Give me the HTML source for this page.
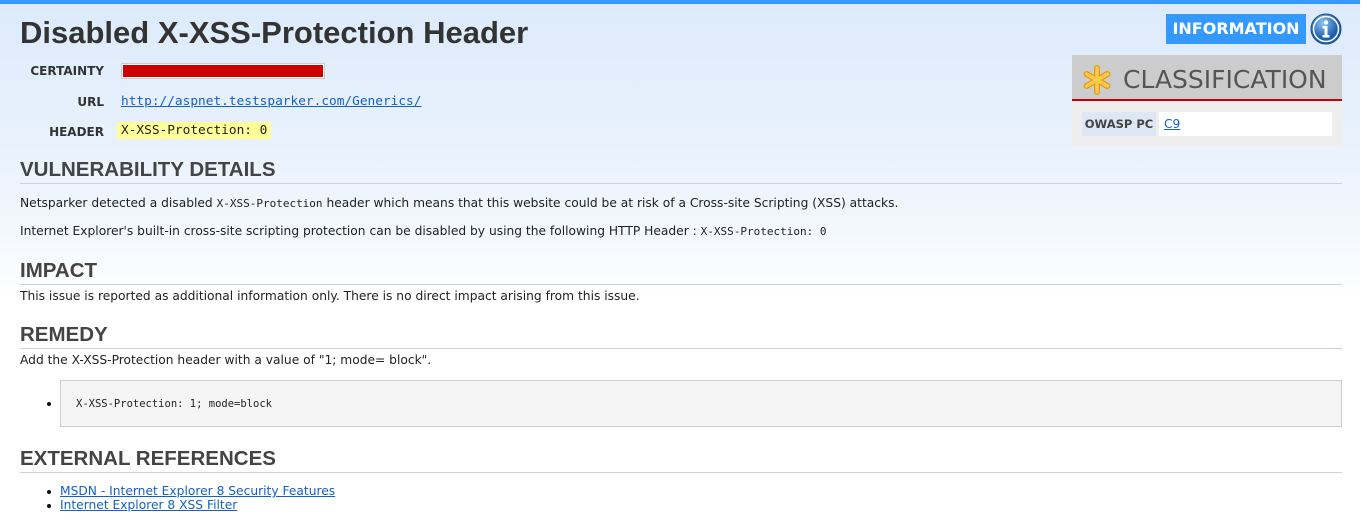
<!DOCTYPE html>
<html><head><meta charset="utf-8"><style>
*{margin:0;padding:0;box-sizing:border-box}
body{width:1367px;height:528px;overflow:hidden;position:relative;font-family:"DejaVu Sans","Liberation Sans",sans-serif;font-size:12.25px;color:#222;background:linear-gradient(180deg,#dceafb 0px,#eef5fd 200px,#fff 300px)}
.a{position:absolute;white-space:nowrap}
.topbar{position:absolute;left:0;top:0;width:1360px;height:4px;background:#3399ff}
.sb{position:absolute;left:1360px;top:0;width:7px;height:528px;background:#fff}
h1{font-family:"Liberation Sans",sans-serif;font-weight:bold;font-size:31px;color:#333;letter-spacing:0px}
.lbl{font-family:"DejaVu Sans",sans-serif;font-weight:bold;font-size:12px;color:#333;text-align:right;width:84px}
.mono{font-family:"DejaVu Sans Mono","Liberation Mono",monospace}
a{color:#1560c8;text-decoration:underline}
.h2{position:absolute;left:20px;width:1322px;font-family:"Liberation Sans",sans-serif;font-weight:bold;font-size:20.5px;color:#444;border-bottom:1px solid #c9d3de;line-height:26px}
.small{font-size:11px}
.dot{position:absolute;width:4px;height:4px;background:#111;border-radius:50%}
</style></head><body>
<div class="topbar"></div><div class="sb"></div>
<h1 class="a" style="left:20px;top:15px">Disabled X-XSS-Protection Header</h1>
<div class="a lbl" style="left:20px;top:64px">CERTAINTY</div>
<div class="a" style="left:121px;top:63px;width:204px;height:16px;border:1px solid #ccc;background:#fff;padding:1px"><div style="background:#c00;width:100%;height:100%"></div></div>
<div class="a lbl" style="left:20px;top:95px">URL</div>
<a class="a mono" style="left:121px;top:94px;font-size:12.8px" href="#">http://aspnet.testsparker.com/Generics/</a>
<div class="a lbl" style="left:20px;top:125px">HEADER</div>
<div class="a mono" style="left:117px;top:122px;background:#ffff99;padding:1px 4px;font-size:12.8px">X-XSS-Protection: 0</div>

<div class="a" style="left:1166px;top:14px;width:140px;height:30px;background:#3399ff;color:#fff;font-family:'DejaVu Sans',sans-serif;font-weight:bold;font-size:16px;line-height:30px;text-align:center">INFORMATION</div>
<svg class="a" style="left:1310px;top:13px" width="32" height="32" viewBox="0 0 32 32"><defs><radialGradient id="g" cx="40%" cy="30%"><stop offset="0" stop-color="#8ec3f3"/><stop offset="1" stop-color="#1d5fae"/></radialGradient></defs><circle cx="16" cy="16" r="15" fill="url(#g)" stroke="#1a4f8f"/><circle cx="16" cy="16" r="12.5" fill="none" stroke="#fff" stroke-width="1.5"/><circle cx="16" cy="9.5" r="2.2" fill="#fff"/><path d="M12.5 13h5v9h2v2.5h-7V22h2v-6.5h-2z" fill="#fff"/></svg>

<div class="a" style="left:1072px;top:55px;width:270px;height:91px;background:#eee"></div>
<div class="a" style="left:1072px;top:55px;width:270px;height:46px;background:#ccc;border-bottom:2px solid #c00"></div>
<svg class="a" style="left:1082px;top:65px" width="30" height="30" viewBox="0 0 30 30"><g stroke="#e89a10" stroke-width="6" stroke-linecap="round"><path d="M15 3v24M4.6 9l20.8 12M4.6 21l20.8-12"/></g><g stroke="#ffc94a" stroke-width="3.5" stroke-linecap="round"><path d="M15 3v24M4.6 9l20.8 12M4.6 21l20.8-12"/></g></svg>
<div class="a" style="left:1123px;top:65px;font-family:'DejaVu Sans',sans-serif;font-size:25px;color:#555">CLASSIFICATION</div>
<div class="a" style="left:1082px;top:112px;width:74px;height:24px;background:#dde8f4;font-weight:bold;font-size:11.5px;color:#444;line-height:24px;text-align:center">OWASP PC</div>
<div class="a" style="left:1159px;top:112px;width:173px;height:24px;background:#fff;line-height:24px;padding-left:5px"><a href="#">C9</a></div>

<div class="h2" style="top:157px">VULNERABILITY DETAILS</div>
<div class="a" style="left:20px;top:196px">Netsparker detected a disabled <span class="mono small">X-XSS-Protection</span> header which means that this website could be at risk of a Cross-site Scripting (XSS) attacks.</div>
<div class="a" style="left:20px;top:224px">Internet Explorer's built-in cross-site scripting protection can be disabled by using the following HTTP Header : <span class="mono small">X-XSS-Protection: 0</span></div>

<div class="h2" style="top:258px">IMPACT</div>
<div class="a" style="left:20px;top:289px">This issue is reported as additional information only. There is no direct impact arising from this issue.</div>

<div class="h2" style="top:322px">REMEDY</div>
<div class="a" style="left:20px;top:353px">Add the X-XSS-Protection header with a value of "1; mode= block".</div>
<div class="dot" style="left:47px;top:402px"></div>
<div class="a" style="left:60px;top:380px;width:1282px;height:47px;background:#f5f5f5;border:1px solid #ccc"></div>
<div class="a mono" style="left:76px;top:398px;font-size:10.5px">X-XSS-Protection: 1; mode=block</div>

<div class="h2" style="top:446px">EXTERNAL REFERENCES</div>
<div class="dot" style="left:47px;top:490px"></div>
<a class="a" style="left:60px;top:484px" href="#">MSDN - Internet Explorer 8 Security Features</a>
<div class="dot" style="left:47px;top:504px"></div>
<a class="a" style="left:60px;top:498px" href="#">Internet Explorer 8 XSS Filter</a>
</body></html>
